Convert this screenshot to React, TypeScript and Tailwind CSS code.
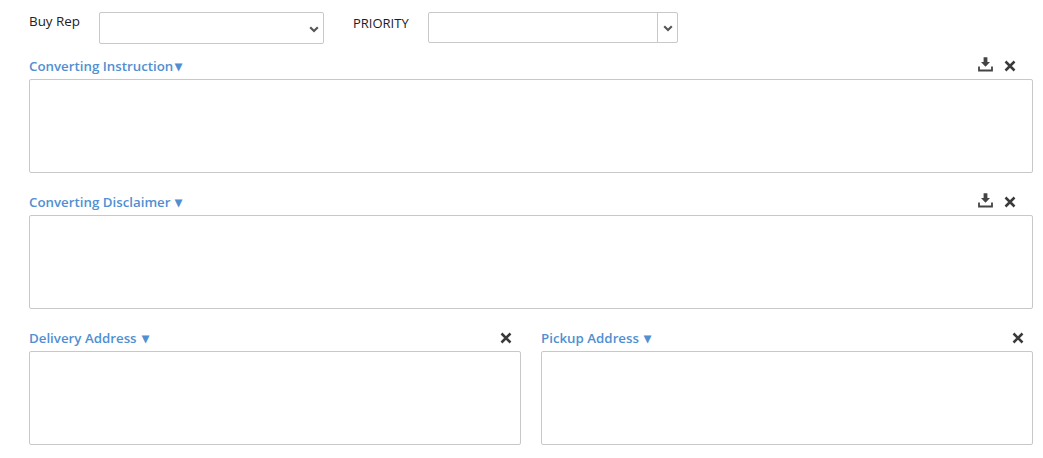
import React from "react";

const Chevron = () => (
  <svg width="10" height="7" viewBox="0 0 10 7" className="block">
    <path d="M1.2 1.2 5 5 8.8 1.2" fill="none" stroke="#555" strokeWidth="2.1" />
  </svg>
);

const Close = () => (
  <svg width="12" height="12" viewBox="0 0 12 12" className="block">
    <path d="M1.5 1.5 10.5 10.5M10.5 1.5 1.5 10.5" fill="none" stroke="#3a3a3a" strokeWidth="2.5" />
  </svg>
);

const Save = () => (
  <svg width="15" height="15" viewBox="0 0 15 15" className="block">
    <path d="M5.6 0.3h3.8v4.7h2.6L7.5 9.8 3 5h2.6z" fill="#444" />
    <path d="M1 9.5v4h13v-4" fill="none" stroke="#444" strokeWidth="1.8" />
  </svg>
);

function Header({ label, gap, save, pad }: { label: string; gap: string; save?: boolean; pad: string }) {
  return (
    <div className="flex h-[27px] items-center justify-between pt-[1px]">
      <span className="flex translate-y-[1px] items-center text-[13.3px] font-semibold text-[#4f8fd2]">
        {label}
        <span className={`${gap} -translate-y-[1px] text-[14px] leading-none`}>▾</span>
      </span>
      <span className={`flex items-center gap-[11px] ${pad}`}>
        {save && (
          <span className="-mt-[3px]">
            <Save />
          </span>
        )}
        <Close />
      </span>
    </div>
  );
}

const Box = () => <div className="h-[94px] rounded-[2px] border border-[#c8c8c8] bg-white" />;

export default function App() {
  return (
    <div className="h-[458px] w-[1043px] overflow-hidden bg-white pl-[29px] pr-[10px] pt-[12px] font-['Open_Sans',sans-serif]">
      <div className="flex h-[32px] items-start text-[13px] text-[#222]">
        <span className="-mt-[1px] w-[70px] text-[13.4px]">Buy Rep</span>
        <div className="flex h-[32px] w-[225px] items-center justify-end rounded-[2px] border border-[#c8c8c8] pr-[4px] pt-[2px]">
          <Chevron />
        </div>
        <span className="ml-[29px] w-[75px] pt-[2px] text-[#1a1a2a]">PRIORITY</span>
        <div className="flex h-[31px] w-[250px] justify-end rounded-[2px] border border-[#c8c8c8]">
          <div className="flex w-[20px] items-center justify-center border-l border-[#c8c8c8] pt-[1px]">
            <Chevron />
          </div>
        </div>
      </div>
      <div className="mt-[8px]">
        <Header label="Converting Instruction" gap="ml-[2px]" save pad="pr-[17px]" />
        <Box />
      </div>
      <div className="mt-[15px]">
        <Header label="Converting Disclaimer" gap="ml-[5px]" save pad="pr-[17px]" />
        <Box />
      </div>
      <div className="mt-[15px] grid grid-cols-2 gap-[20px]">
        <div>
          <Header label="Delivery Address" gap="ml-[5px]" pad="pr-[9px]" />
          <Box />
        </div>
        <div>
          <Header label="Pickup Address" gap="ml-[5px]" pad="pr-[9px]" />
          <Box />
        </div>
      </div>
    </div>
  );
}
